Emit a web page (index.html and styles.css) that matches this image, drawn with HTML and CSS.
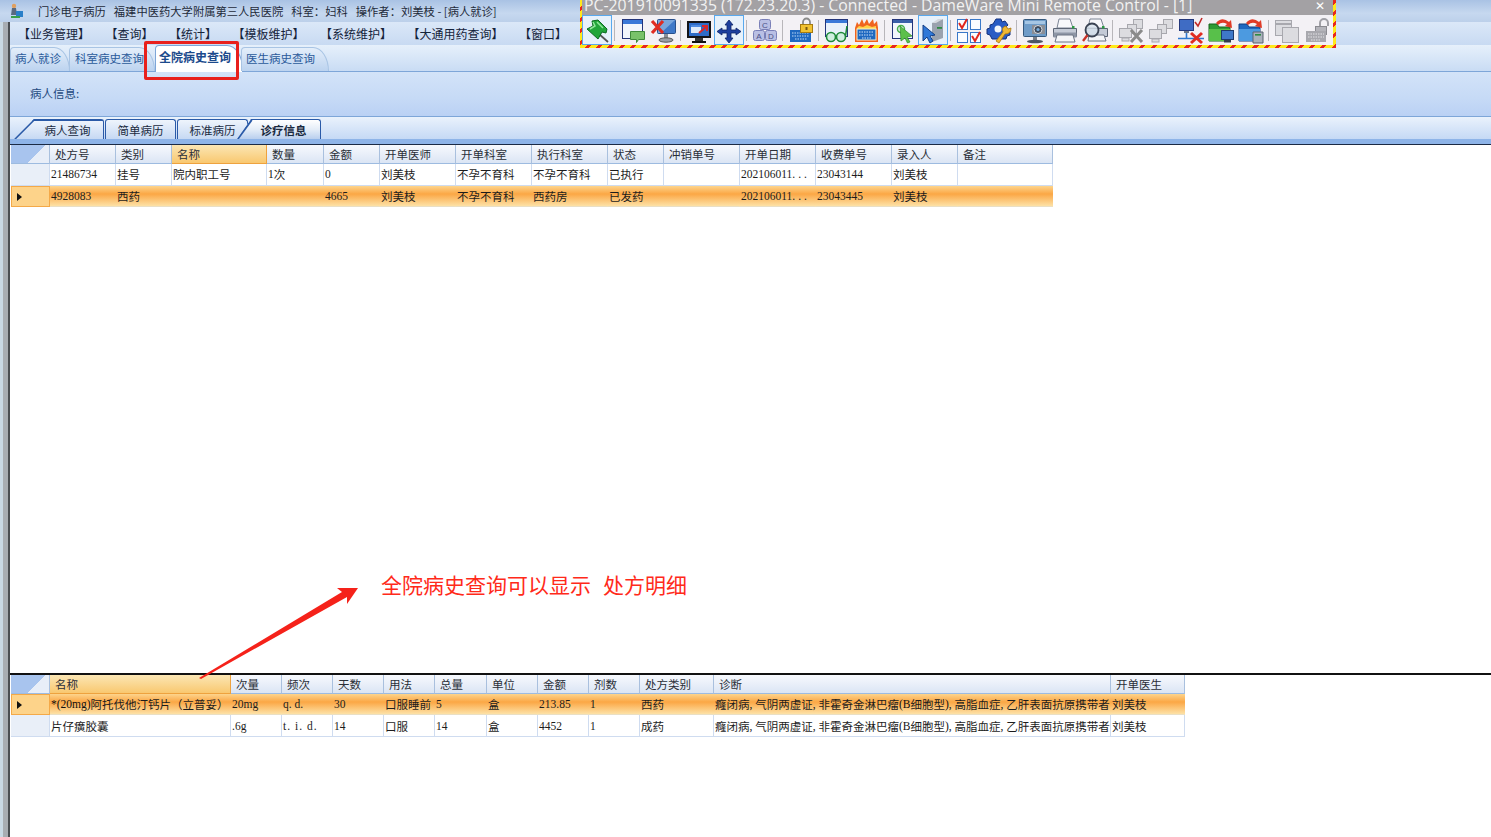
FILE: index.html
```html
<!DOCTYPE html>
<html lang="zh">
<head>
<meta charset="utf-8">
<title>门诊电子病历</title>
<link rel="stylesheet" href="styles.css">
</head>
<body>
<div class="window">
  <div class="edge"></div>
  <div class="main">
    <div class="titlebar">
      <svg class="appicon" width="14" height="16" viewBox="0 0 14 16"><circle cx="4" cy="3" r="2.2" fill="#e0a060"/><path d="M2 5h4l1 7H1z" fill="#5a6a80"/><rect x="6" y="8" width="7" height="6" fill="#2a7fc8"/><rect x="1" y="13" width="9" height="2" fill="#3aa04a"/></svg>
      <span class="apptitle">门诊电子病历</span><span class="apptitle">福建中医药大学附属第三人民医院</span><span class="apptitle">科室：妇科</span><span class="apptitle">操作者：刘美枝 - [病人就诊]</span>
    </div>
    <nav class="menubar">
      <span class="menu">【业务管理】</span>
      <span class="menu">【查询】</span>
      <span class="menu">【统计】</span>
      <span class="menu">【模板维护】</span>
      <span class="menu">【系统维护】</span>
      <span class="menu">【大通用药查询】</span>
      <span class="menu">【窗口】</span>
    </nav>
    <div class="tabstrip">
      <span class="tab tab-a">病人就诊</span>
      <span class="tab tab-b">科室病史查询</span>
      <span class="tab tab-c active">全院病史查询</span>
      <span class="tab tab-d">医生病史查询</span>
    </div>
    <div class="infopanel"><span class="infolabel">病人信息:</span></div>
    <div class="subtabs">
      <span class="subtab first">病人查询</span>
      <span class="subtab">简单病历</span>
      <span class="subtab">标准病历</span>
      <span class="subtab current">诊疗信息</span>
    </div>
    <div class="band"></div>

    <section class="pane-top">
      <div class="grid cols-a">
        <div class="row head">
          <div class="cell corner"></div>
          <div class="cell">处方号</div><div class="cell">类别</div><div class="cell sorted">名称</div><div class="cell">数量</div><div class="cell">金额</div><div class="cell">开单医师</div><div class="cell">开单科室</div><div class="cell">执行科室</div><div class="cell">状态</div><div class="cell">冲销单号</div><div class="cell">开单日期</div><div class="cell">收费单号</div><div class="cell">录入人</div><div class="cell">备注</div>
        </div>
        <div class="row body tall">
          <div class="cell rowhead"></div>
          <div class="cell num">21486734</div><div class="cell">挂号</div><div class="cell">院内职工号</div><div class="cell"><span class="num">1</span>次</div><div class="cell num">0</div><div class="cell">刘美枝</div><div class="cell">不孕不育科</div><div class="cell">不孕不育科</div><div class="cell">已执行</div><div class="cell"></div><div class="cell num">202106011<span class="dots">...</span></div><div class="cell num">23043144</div><div class="cell">刘美枝</div><div class="cell"></div>
        </div>
        <div class="row body selected">
          <div class="cell rowhead"><i class="marker"></i></div>
          <div class="cell num">4928083</div><div class="cell">西药</div><div class="cell"></div><div class="cell"></div><div class="cell num">4665</div><div class="cell">刘美枝</div><div class="cell">不孕不育科</div><div class="cell">西药房</div><div class="cell">已发药</div><div class="cell"></div><div class="cell num">202106011<span class="dots">...</span></div><div class="cell num">23043445</div><div class="cell">刘美枝</div><div class="cell"></div>
        </div>
      </div>
    </section>

    <div class="splitter"></div>

    <section class="pane-bottom">
      <div class="grid cols-b">
        <div class="row head">
          <div class="cell corner"></div>
          <div class="cell sorted">名称</div><div class="cell">次量</div><div class="cell">频次</div><div class="cell">天数</div><div class="cell">用法</div><div class="cell">总量</div><div class="cell">单位</div><div class="cell">金额</div><div class="cell">剂数</div><div class="cell">处方类别</div><div class="cell">诊断</div><div class="cell">开单医生</div>
        </div>
        <div class="row body selected">
          <div class="cell rowhead"><i class="marker"></i></div>
          <div class="cell"><span class="num">*(20mg)</span>阿托伐他汀钙片（立普妥）</div><div class="cell num">20mg</div><div class="cell num">q. d.</div><div class="cell num">30</div><div class="cell">口服睡前</div><div class="cell num">5</div><div class="cell">盒</div><div class="cell num">213.85</div><div class="cell num">1</div><div class="cell">西药</div><div class="cell">癃闭病<span class="num">,&nbsp;</span>气阴两虚证<span class="num">,&nbsp;</span>非霍奇金淋巴瘤<span class="num">(B</span>细胞型<span class="num">),&nbsp;</span>高脂血症<span class="num">,&nbsp;</span>乙肝表面抗原携带者</div><div class="cell">刘美枝</div>
        </div>
        <div class="row body tall">
          <div class="cell rowhead"></div>
          <div class="cell">片仔癀胶囊</div><div class="cell num">.6g</div><div class="cell num wide">t. i. d.</div><div class="cell num">14</div><div class="cell">口服</div><div class="cell num">14</div><div class="cell">盒</div><div class="cell num">4452</div><div class="cell num">1</div><div class="cell">成药</div><div class="cell">癃闭病<span class="num">,&nbsp;</span>气阴两虚证<span class="num">,&nbsp;</span>非霍奇金淋巴瘤<span class="num">(B</span>细胞型<span class="num">),&nbsp;</span>高脂血症<span class="num">,&nbsp;</span>乙肝表面抗原携带者</div><div class="cell">刘美枝</div>
        </div>
      </div>
    </section>
  </div>
</div>

<div class="highlight-box"></div>
<p class="annotation">全院病史查询可以显示<span class="annotation-gap">处方明细</span></p>
<svg class="arrow" width="170" height="100" viewBox="195 583 170 100"><path d="M199 678 L342 592 L337 588 L358 588 L347 604 L347 597 L201 679 Z" fill="#f5221a"/></svg>

<div class="remote">
  <div class="remote-title"><span class="remote-text">PC-201910091335 (172.23.20.3) - Connected - DameWare Mini Remote Control - [1]</span><span class="remote-close">✕</span></div>
  <div class="remote-bar">
    <div class="tb on"><svg viewBox="0 0 30 30"><path d="M17 19 L26 27" stroke="#555" stroke-width="1.700"/><path d="M10 6 L16 5 L25 14 L24 18 L20 17 L16 24 L5 14 L11 11 Z" fill="#22a63a" stroke="#0c6a20"/><path d="M11 7 L13 11 L8 14 M15 7 L21 13" stroke="#8fe89a" stroke-width="1.500" fill="none"/></svg></div>
    <div class="sep"></div>
    <div class="tb"><svg viewBox="0 0 30 30"><rect x="4.500" y="4.500" width="20" height="19" fill="#f2f6fc" stroke="#23357a"/><rect x="5" y="5" width="19" height="4" fill="#3a78d8"/><path d="M12.500 16.500h14v8h-6l-2 3v-3h-6z" fill="#79c26a" stroke="#3f8a3a"/></svg></div>
    <div class="tb"><svg viewBox="0 0 30 30"><rect x="9.500" y="4.500" width="18" height="14" rx="1" fill="#3f78c8" stroke="#28508c"/><path d="M10 5h17L13 18h-3z" fill="#7aa6dc"/><rect x="16" y="19" width="4" height="4" fill="#8a8e96"/><ellipse cx="18" cy="25" rx="7" ry="2.200" fill="#9a9ea6" stroke="#555"/><path d="M4 6 L15 18 M15 6 L4 18" stroke="#e02c22" stroke-width="3.200"/></svg></div>
    <div class="sep"></div>
    <div class="tb"><svg viewBox="0 0 30 30"><rect x="3" y="6" width="24" height="17" fill="#141418"/><rect x="5" y="8" width="20" height="13" fill="#2f6cc8"/><rect x="7" y="10" width="10" height="8" fill="#dfeafa"/><rect x="7" y="10" width="10" height="2" fill="#4f8ae0"/><path d="M15 18 L22 12 M18 11h5v5" stroke="#d8262a" stroke-width="2" fill="none"/><rect x="11" y="23" width="8" height="3" fill="#333"/><rect x="8" y="26" width="14" height="2" fill="#111"/></svg></div>
    <div class="tb on"><svg viewBox="0 0 30 30"><path d="M15 5 L19 10 H17 V15 H22 V13 L27 16.500 L22 20 V18 H17 V23 H19 L15 28 L11 23 H13 V18 H8 V20 L3 16.500 L8 13 V15 H13 V10 H11 Z" fill="#1d3f9e" stroke="#0e2568" stroke-width="0.800"/></svg></div>
    <div class="sep"></div>
    <div class="tb"><svg viewBox="0 0 30 30" class="letters"><rect x="9.500" y="4.500" width="11" height="10" rx="2"/><rect x="3.500" y="15.500" width="11" height="10" rx="2"/><rect x="15.500" y="15.500" width="11" height="10" rx="2"/><text x="15" y="13">C</text><text x="9" y="24">A</text><text x="21" y="24">D</text></svg></div>
    <div class="sep"></div>
    <div class="tb"><svg viewBox="0 0 30 30"><rect x="4" y="15" width="21" height="12" fill="#1e68c0"/><path d="M6 18h17M6 21h17M9 24h12" stroke="#bcd8f5" stroke-width="1.200" stroke-dasharray="1.500 1"/><path d="M17 9 V7 a3.500 3.500 0 0 1 7 0 V9" stroke="#8a8a8a" stroke-width="1.800" fill="none"/><rect x="14.500" y="9.500" width="12" height="8" fill="#f2c230" stroke="#a67a10"/><rect x="19.500" y="12" width="2" height="3" fill="#7a5a10"/></svg></div>
    <div class="sep"></div>
    <div class="tb"><svg viewBox="0 0 30 30"><rect x="3.500" y="4.500" width="22" height="17" fill="#e8f0fa" stroke="#23357a"/><rect x="4" y="5" width="21" height="3" fill="#3a78d8"/><circle cx="9" cy="22" r="4.500" fill="#cfeee0" stroke="#1f8a3a" stroke-width="1.600"/><circle cx="19" cy="22" r="4.500" fill="#cfeee0" stroke="#1f8a3a" stroke-width="1.600"/><path d="M13.500 21 h1 M23.500 21 L25 11" stroke="#1f8a3a" stroke-width="1.600" fill="none"/></svg></div>
    <div class="tb"><svg viewBox="0 0 30 30"><path d="M3 13 L5 7 L7 10 L10 4 L12 9 L15 4 L17 9 L21 4 L22 9 L25 6 L26 13 V27 H3 Z" fill="#f0641e"/><path d="M5 13 L7 11 L11 12 L15 10 L20 12 L24 11 V14 H5 Z" fill="#ffd24a"/><rect x="5" y="14" width="19" height="11" fill="#1e68c0" stroke="#f8f0d0"/><path d="M7 17h15M7 20h15M10 23h9" stroke="#cfe2f8" stroke-width="1.200" stroke-dasharray="1.500 1"/></svg></div>
    <div class="sep"></div>
    <div class="tb"><svg viewBox="0 0 30 30"><rect x="4.500" y="4.500" width="20" height="19" fill="#f2f6fc" stroke="#23357a"/><rect x="5" y="5" width="19" height="3" fill="#3a5fa8"/><circle cx="13" cy="14" r="3.500" fill="none" stroke="#45b04a" stroke-width="1.500"/><path d="M12 11 L24 21 L19 22 L22 27 L19.500 28 L17 23 L13 26 Z" fill="#5cc04a" stroke="#2f8a2a" stroke-width="0.700"/></svg></div>
    <div class="tb on"><svg viewBox="0 0 30 30"><path d="M14 8 L25 4 V23 L14 27 Z" fill="#9aa2ae"/><path d="M14 8 L20 4 H25 L18 8 Z" fill="#d4d8de"/><rect x="19" y="12" width="5" height="1.800" fill="#2e8a44"/><path d="M5 10 L5 26 L9 22 L12 28 L15 26 L12 21 L17 20 Z" fill="#2f78d8" stroke="#143e84"/></svg></div>
    <div class="sep"></div>
    <div class="tb"><svg viewBox="0 0 30 30" class="checks"><rect x="3.500" y="4.500" width="10" height="10"/><rect x="16.500" y="4.500" width="10" height="10"/><rect x="3.500" y="17.500" width="10" height="10"/><rect x="16.500" y="17.500" width="10" height="10"/><path d="M5 8 L8 13 L13 4 M18 21 L21 26 L26 17"/></svg></div>
    <div class="tb"><svg viewBox="0 0 30 30"><path d="M12 4 h5 l1 3 3-1 3 4-2 2 1 3 3 1v4l-3 1-1 3H8l-2-4-3-1v-5l3-1 0-3 3-1z" fill="#2a5cc4" stroke="#12307c"/><circle cx="14" cy="14" r="3.500" fill="#f4f6fa"/><path d="M12 26 L19 17 Q17 12 22 11 L24 14 L27 13 Q27 19 21 19 L15 28 Z" fill="#f0b832" stroke="#a87510" stroke-width="0.800"/></svg></div>
    <div class="sep"></div>
    <div class="tb"><svg viewBox="0 0 30 30"><rect x="3.500" y="4.500" width="23" height="17" rx="1" fill="#6f9cc8" stroke="#35587c"/><rect x="5" y="6" width="20" height="3" fill="#a6c6e4"/><rect x="12" y="10" width="13" height="9" fill="#8a8e96"/><circle cx="18" cy="14.500" r="4" fill="#3d4a5c" stroke="#d8dce2"/><circle cx="18" cy="14.500" r="1.600" fill="#7ab0e0"/><rect x="13" y="22" width="4" height="3" fill="#7c8088"/><ellipse cx="15" cy="26.500" rx="8" ry="1.800" fill="#4c5664"/></svg></div>
    <div class="tb"><svg viewBox="0 0 30 30"><path d="M9 4h11l3 9H7z" fill="#f8f8fb" stroke="#7c8494"/><path d="M3.500 13.500h23v8h-23z" fill="#c4cad6" stroke="#5c6474"/><path d="M3.500 17.500h23v5h-23z" fill="#8e96a6"/><path d="M7 20h16l2 7H5z" fill="#f4f5f8" stroke="#6c7484"/><rect x="22" y="11" width="2.500" height="2.500" fill="#2e9a44"/></svg></div>
    <div class="tb"><svg viewBox="0 0 30 30"><path d="M10 4h11l3 9H8z" fill="#f8f8fb" stroke="#7c8494"/><path d="M6.500 13.500h21v8h-21z" fill="#c4cad6" stroke="#5c6474"/><path d="M9 20h15l2 6H8z" fill="#f4f5f8" stroke="#6c7484"/><rect x="22" y="11" width="2.500" height="2.500" fill="#2e9a44"/><circle cx="12" cy="15" r="6.500" fill="#d8e2ee" fill-opacity=".8" stroke="#3a4252" stroke-width="1.800"/><path d="M7.500 20 L3 26" stroke="#c8342a" stroke-width="2.400"/></svg></div>
    <div class="sep"></div>
    <div class="tb"><svg viewBox="0 0 30 30" class="ghost"><rect x="17.500" y="4.500" width="9" height="9"/><rect x="11.500" y="9.500" width="9" height="9"/><rect x="3.500" y="13.500" width="12" height="9"/><rect x="6" y="23" width="7" height="3"/><path d="M15 15 L26 27 M26 15 L15 27" stroke="#8a8a8a" stroke-width="3"/></svg></div>
    <div class="tb"><svg viewBox="0 0 30 30" class="ghost"><rect x="17.500" y="4.500" width="9" height="9"/><rect x="11.500" y="9.500" width="9" height="9"/><rect x="3.500" y="14.500" width="12" height="9"/><rect x="6" y="24" width="7" height="3"/></svg></div>
    <div class="tb"><svg viewBox="0 0 30 30"><rect x="3.500" y="4.500" width="14" height="11" fill="#3f6cc4" stroke="#24387c"/><rect x="8" y="16" width="5" height="2" fill="#6a7488"/><path d="M10.500 18v5M2 23.500h26" stroke="#2f78d0" stroke-width="1.600"/><path d="M15 18 L26 28 M26 18 L15 28" stroke="#e02c22" stroke-width="3"/><path d="M19 7 L22 11 L26 3" stroke="#c02a28" stroke-width="1.600" fill="none"/></svg></div>
    <div class="tb"><svg viewBox="0 0 30 30"><path d="M3 9h8l2 3h11v14H3z" fill="#2e9a34" stroke="#14641c"/><path d="M3 14h21v12H3z" fill="#58c04a"/><path d="M10 8 Q16 1 23 7 L25 5 L26 13 L19 11 L21 9 Q16 6 12 10 Z" fill="#e03a26"/><rect x="15.500" y="15.500" width="12" height="9" fill="#3f78c8" stroke="#1f3a6c"/><rect x="18" y="25" width="7" height="2.500" fill="#333c4c"/></svg></div>
    <div class="tb"><svg viewBox="0 0 30 30"><path d="M3 9h8l2 3h11v14H3z" fill="#1e68c0" stroke="#123e80"/><path d="M3 14h21v12H3z" fill="#4c9ae0"/><path d="M10 8 Q16 1 23 7 L25 5 L26 13 L19 11 L21 9 Q16 6 12 10 Z" fill="#e03a26"/><path d="M17 17h10v11H17z" fill="#aab2bc" stroke="#5a6270"/><rect x="19" y="19" width="6" height="1.600" fill="#2e8a44"/></svg></div>
    <div class="sep"></div>
    <div class="tb"><svg viewBox="0 0 30 30" class="ghost"><rect x="3.500" y="5.500" width="16" height="15"/><rect x="10.500" y="12.500" width="16" height="15" fill="#f0eff3"/><path d="M4 9h15" stroke="#a8a8ae" stroke-width="2"/></svg></div>
    <div class="tb"><svg viewBox="0 0 30 30"><path d="M18 13 V8 a4 4 0 0 1 8 0 V11" stroke="#a0a0a6" stroke-width="2" fill="none"/><rect x="13.500" y="11.500" width="11" height="8" fill="#b4b4ba" stroke="#8a8a90"/><rect x="4" y="16" width="20" height="11" fill="#a8a8ae"/><path d="M6 19h16M6 22h16M9 25h10" stroke="#e4e4e8" stroke-width="1.200" stroke-dasharray="1.500 1"/></svg></div>
  </div>
</div>
</body>
</html>
```
FILE: styles.css
```css
* { box-sizing: border-box; }
html, body { margin: 0; padding: 0; }
body {
  width: 1491px;
  height: 837px;
  overflow: hidden;
  position: relative;
  background: #fff;
  font-family: "Noto Sans CJK SC", "Liberation Sans", sans-serif;
  font-size: 11.5px;
  color: #1a1a1a;
}
.window { display: flex; height: 837px; }
.edge {
  width: 10px;
  flex: none;
  background: linear-gradient(90deg, #c9d9e4 0 3px, #a8adb2 3px 8px, #4a4e52 8px 10px);
}
.main { flex: 1; min-width: 0; display: flex; flex-direction: column; }

.titlebar {
  height: 22px;
  flex: none;
  display: flex;
  align-items: center;
  gap: 8px;
  margin-left: -10px;
  padding-left: 10px;
  background: linear-gradient(180deg, #a9c2e4, #c6d8ef 60%, #bcd0ea);
  position: relative;
}
.appicon { flex: none; margin-right: 6px; }
.apptitle { font-size: 11.3px; color: #1e2a3a; white-space: nowrap; }

.menubar {
  height: 23px;
  flex: none;
  display: flex;
  align-items: center;
  gap: 27.5px;
  padding-left: 14px;
  background: linear-gradient(180deg, #dbe8f8, #c8daf2);
}
.menu { font-size: 12px; font-feature-settings: "halt"; color: #15233a; white-space: nowrap; }

.tabstrip {
  height: 27px;
  flex: none;
  display: flex;
  align-items: flex-end;
  background: linear-gradient(180deg, #e6f0fb, #c9dcf4);
  border-bottom: 1px solid #7ea6d8;
}
.tab {
  height: 24px;
  display: flex;
  align-items: center;
  padding: 0 0 3px 4px;
  font-size: 11.5px;
  color: #2a5a9a;
  white-space: nowrap;
  background: linear-gradient(180deg, #e4eefa, #bcd3ef);
  border: 1px solid #a8c4e4;
  border-bottom: 0;
  border-radius: 4px 16px 0 0 / 4px 24px 0 0;
}
.tab-a { width: 60px; }
.tab-b { width: 86px; margin-left: -1px; padding-left: 5px; }
.tab-c { width: 88px; padding-left: 3px; }
.tab-d { width: 88px; margin-left: -2px; }
.tab.active {
  height: 27px;
  margin-bottom: -1px;
  padding-bottom: 6px;
  background: #fff;
  font-size: 12px;
  font-weight: 700;
  color: #1c4a8c;
  border-color: #7ea6d8;
}

.infopanel {
  height: 45px;
  flex: none;
  display: flex;
  align-items: center;
  padding: 0 0 3px 20px;
  background: linear-gradient(180deg, #d3e3f8, #c6daf6 60%, #bad1f4);
  border-bottom: 1px solid #7ea6d8;
}
.infolabel { color: #234a80; font-size: 11.5px; }

.subtabs {
  height: 22px;
  flex: none;
  display: flex;
  align-items: flex-end;
  padding-left: 4px;
  background: linear-gradient(180deg, #eaf2fc, #c5d9f5);
}
.subtab {
  height: 20px;
  width: 71px;
  display: flex;
  align-items: center;
  justify-content: center;
  margin-right: 1px;
  background: linear-gradient(180deg, #eef4fc, #c6d9f3);
  border: 1px solid #2a5aa8;
  border-bottom: 0;
  border-radius: 3px 3px 0 0;
  color: #1a2a40;
  font-size: 11.5px;
}
.subtab.first {
  width: 90px;
  padding-left: 18px;
  border-left: 0;
  position: relative;
  clip-path: polygon(0 100%, 20px 0, 100% 0, 100% 100%);
  background: linear-gradient(180deg, #2a5aa8 0 1px, #eef4fc 1px, #c6d9f3);
}
.subtab.first::before {
  content: "";
  position: absolute;
  left: 1px;
  bottom: 0;
  width: 28px;
  height: 1.5px;
  background: #2a5aa8;
  transform-origin: left bottom;
  transform: rotate(-45deg);
}
.subtab.current {
  width: 84px;
  margin-left: -12px;
  padding-left: 10px;
  font-weight: 700;
  position: relative;
  border-left: 0;
  background: linear-gradient(180deg, #fff, #e4edf8 50%, #b9cfee);
  clip-path: polygon(0 100%, 14px 0, 100% 0, 100% 100%);
}
.subtab.current::before {
  content: "";
  position: absolute;
  left: 1px;
  bottom: 0;
  width: 24px;
  height: 1.5px;
  background: #2a5aa8;
  transform-origin: left bottom;
  transform: rotate(-54deg);
}
.band {
  height: 6px;
  flex: none;
  background: #8eb4e8;
  border-bottom: 1px solid #1b2a44;
}

.pane-top { flex: 1; min-height: 0; padding-left: 1px; background: #fff; }
.splitter { height: 2px; flex: none; background: #111; }
.pane-bottom { height: 162px; flex: none; padding-left: 1px; background: #fff; }

.grid { width: fit-content; }
.cols-a { --cols: 39px 66px 56px 95px 57px 56px 76px 76px 76px 56px 76px 76px 76px 66px 95px; }
.cols-b { --cols: 39px 181px 51px 51px 51px 51px 52px 51px 51px 51px 74px 397px 74px; }
.row { display: grid; grid-template-columns: var(--cols); }
.cell {
  display: flex;
  align-items: center;
  overflow: hidden;
  white-space: nowrap;
  padding-left: 1px;
  min-width: 0;
}
.head { height: 19px; }
.head .cell {
  padding-left: 5px;
  color: #2a2f38;
  background: linear-gradient(180deg, #f7f9fd, #dbe5f4);
  border-right: 1px solid #a9c0de;
  border-bottom: 1px solid #9dbbe0;
}
.head .cell.sorted {
  background: linear-gradient(180deg, #fbe6b4, #f9c870);
  border-right: 1px solid #eea23e;
  border-bottom: 1px solid #eea23e;
}
.head .cell.corner {
  padding: 0;
  background: linear-gradient(135deg, #a8c4ee 0 62%, #e8eef8 62%);
  border-right: 1px solid #a9c0de;
}
.body { height: 21px; }
.body.tall { height: 22px; }
.cols-a .body.tall .cell { padding-bottom: 1px; }
.body .cell {
  border-right: 1px solid #cfdcf0;
  border-bottom: 1px solid #cfdcf0;
  color: #1c1c1c;
}
.body.selected { background: linear-gradient(180deg, #fdd48c, #fba745 38%, #fde6ae); }
.body.selected .cell { border-right-color: transparent; border-bottom-color: #eadfc4; }
.body .cell.rowhead {
  background: #e9eff8;
  justify-content: flex-start;
  padding-left: 5px;
}
.body.selected .cell.rowhead {
  background: #fdd38a;
  border: 1px solid #f4a948;
}
.num { font-family: "Liberation Serif", serif; font-size: 11.5px; color: #111; }
.dots { letter-spacing: 3px; }
.wide { letter-spacing: 1px; }
.marker {
  width: 0;
  height: 0;
  border-left: 5px solid #111;
  border-top: 4px solid transparent;
  border-bottom: 4px solid transparent;
}

.highlight-box {
  position: absolute;
  left: 144px;
  top: 41px;
  width: 95px;
  height: 39px;
  border: 3px solid #e8201c;
  border-radius: 2px;
}
.annotation {
  position: absolute;
  left: 381px;
  top: 569px;
  margin: 0;
  font-size: 21px;
  line-height: 30px;
  color: #ff2a1a;
  white-space: nowrap;
}
.annotation-gap { margin-left: 12px; }
.arrow { position: absolute; left: 195px; top: 583px; }

.remote {
  position: absolute;
  left: 580px;
  top: 0;
  width: 756px;
  height: 48px;
  padding: 0 3px 3px 2px;
  background: repeating-linear-gradient(135deg, #ffe81a 0 5px, #e8281c 5px 8px);
}
.remote-title {
  height: 15px;
  display: flex;
  justify-content: space-between;
  background: #a3a1a4;
  overflow: hidden;
  position: relative;
}
.remote-text {
  font-family: "Open Sans", sans-serif;
  font-size: 15.8px;
  line-height: 15px;
  color: #f2f2f2;
  margin-top: -2px;
  padding-left: 2px;
  white-space: nowrap;
}
.remote-close { color: #fff; font-size: 12px; line-height: 12px; font-weight: 700; padding-right: 8px; font-family: "DejaVu Sans", sans-serif; }
.remote-bar {
  height: 30px;
  display: flex;
  background: #f3f1f5;
}
.tb { width: 30px; height: 30px; flex: none; }
.tb svg { display: block; width: 30px; height: 30px; }
.tb.on { background: #e7f1fb; border: 1px solid #59a9ee; }
.tb.on svg { margin: -1px; }
.sep { width: 6px; flex: none; position: relative; }
.sep::after { content: ""; position: absolute; left: 2px; top: 5px; bottom: 4px; width: 1px; background: #b8b6ba; }
.letters rect { fill: #b9bfe4; stroke: #7a80b8; }
.letters text { font-family: "Liberation Sans", sans-serif; font-size: 8px; fill: #4a5088; text-anchor: middle; }
.checks rect { fill: #fafcff; stroke: #3a78c8; }
.checks path { fill: none; stroke: #e0261e; stroke-width: 2; }
.ghost rect { fill: #dcdce0; stroke: #a8a8ae; }
```
